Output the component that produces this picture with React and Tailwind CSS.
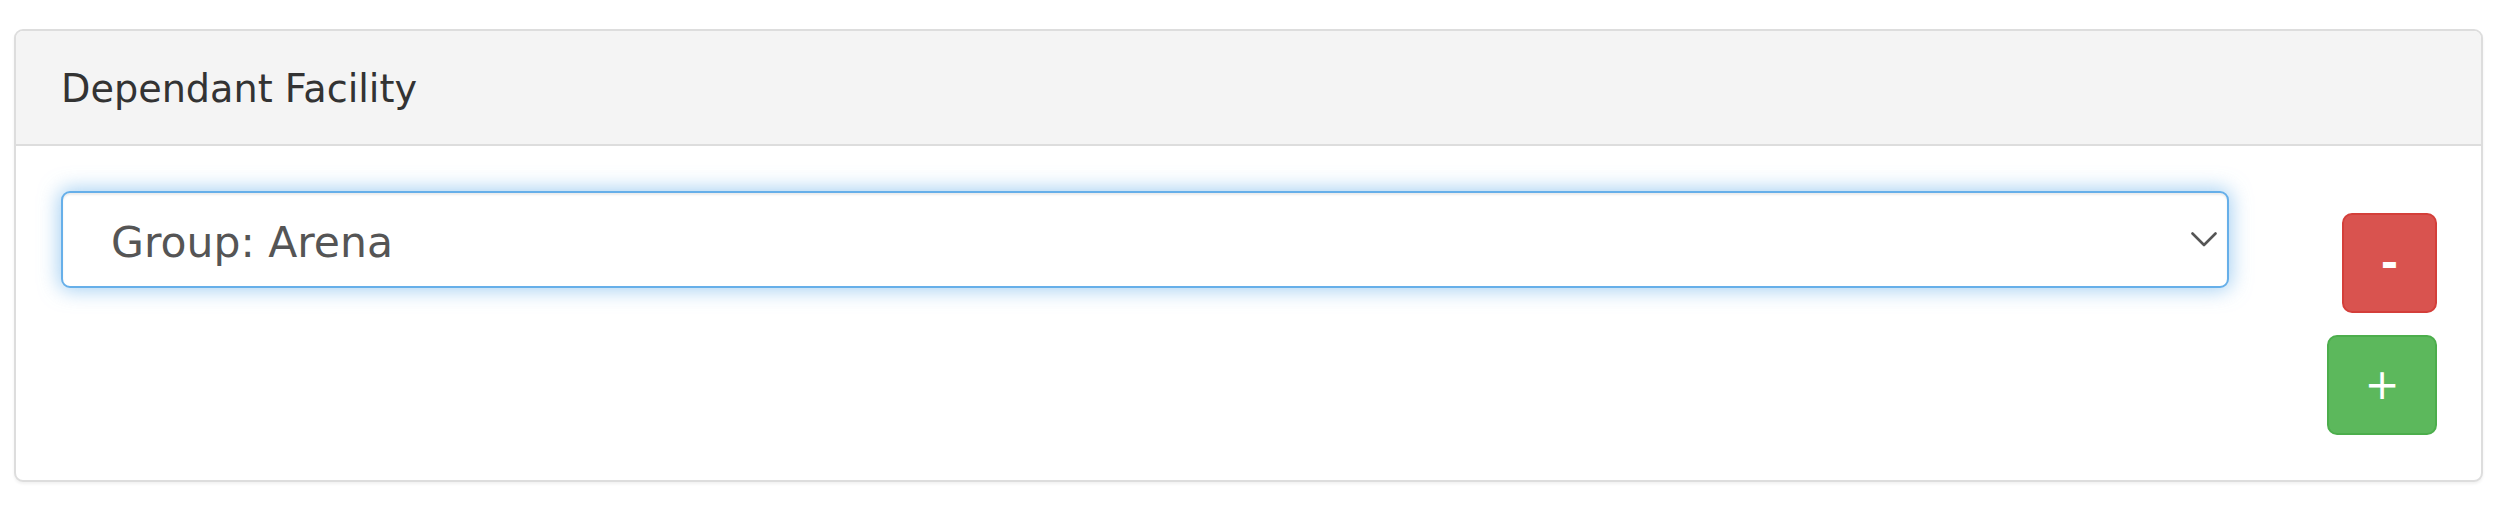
const font = { fontFamily: '"DejaVu Sans", Verdana, sans-serif' };

function Chevron() {
    return (
        <svg width="26" height="15" viewBox="0 0 26 15" fill="none" className="text-[#555]">
            <polyline points="1.5,1.5 13,13 24.5,1.5" stroke="currentColor" strokeWidth="2.6" strokeLinecap="round" strokeLinejoin="round" />
        </svg>
    );
}

function FacilityRow({ value }) {
    return (
        <div className="flex items-start">
            <div className="w-[2168px] h-[97px] flex items-center justify-between pl-[48px] pr-[10px] bg-white border-2 border-[#66afe9] rounded-[9px] shadow-[inset_0_2px_2px_rgba(0,0,0,0.075),0_0_20px_2px_rgba(102,175,233,0.6)]">
                <span className="text-[42.5px] leading-none text-[#555] pt-[7px]">{value}</span>
                <Chevron />
            </div>
            <div className="flex-1 flex flex-col items-end gap-[22px] mt-[22px]">
                <button className="w-[95px] h-[100px] flex items-center justify-center rounded-[10px] bg-[#d9534f] border-2 border-[#d43f3a] text-white text-[42px] font-bold leading-none">
                    -
                </button>
                <button className="w-[110px] h-[100px] flex items-center justify-center rounded-[10px] bg-[#5cb85c] border-2 border-[#4cae4c] text-white text-[42px] leading-none">
                    +
                </button>
            </div>
        </div>
    );
}

export default function App() {
    return (
        <div className="w-[2500px] h-[514px] bg-white pt-[29px] pl-[14px]" style={font}>
            <div className="w-[2469px] bg-white border-2 border-[#ddd] rounded-[9px] shadow-[0_2px_3px_rgba(0,0,0,0.06)] overflow-hidden">
                <div className="h-[115px] flex items-center pl-[45px] bg-[#f4f4f4] border-b-2 border-[#ddd]">
                    <span className="text-[38.2px] leading-none text-[#333] pt-[4px]">Dependant Facility</span>
                </div>
                <div className="pt-[45px] pb-[45px] pl-[45px] pr-[44px]">
                    <FacilityRow value="Group: Arena" />
                </div>
            </div>
        </div>
    );
}
